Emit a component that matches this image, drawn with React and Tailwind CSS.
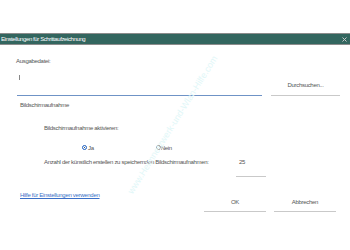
import React from "react";

export default function App() {
  return (
    <div className="relative w-[350px] h-[250px] overflow-hidden bg-white text-[#555] font-['Liberation_Sans',Arial,sans-serif] text-[6px] leading-[6px] tracking-[-0.3px]">
      <div className="h-[33px]" />
      <div className="h-[12px] border-y border-[#8c8c8c] bg-[#33665f] flex items-center justify-between pl-[1px] pr-[3px]">
        <span className="text-white text-[6px] leading-[6px] tracking-[-0.4px]">Einstellungen für Schrittaufzeichnung</span>
        <svg width="5" height="5" viewBox="0 0 5 5" className="block">
          <path d="M0.5 0.5 L4.5 4.5 M4.5 0.5 L0.5 4.5" stroke="#c8c8c8" strokeWidth="1" />
        </svg>
      </div>
      <div className="pl-[16px]">
        <div className="mt-[13px] h-[6px]">Ausgabedatei:</div>
        <div className="flex h-[32px]">
          <div className="ml-[1px] w-[245px] border-b border-[#6f93c6]">
            <div className="mt-[11px] ml-[2px] w-px h-[5px] bg-[#888]" />
          </div>
          <div className="ml-[9px] w-[69px] border-b border-[#c9c9c9] flex items-end justify-center pb-[7px]">
            <span className="h-[6px]">Durchsuchen...</span>
          </div>
        </div>
        <div className="mt-[6px] ml-[4px] h-[6px]">Bildschirmaufnahme</div>
        <div className="mt-[17px] ml-[28px] h-[6px]">Bildschirmaufnahme aktivieren:</div>
        <div className="mt-[14px] flex items-center h-[5px]">
          <div className="ml-[66px] flex items-center">
            <span className="w-[5px] h-[5px] rounded-full border-[1.5px] border-[#1d5fbf] bg-white flex items-center justify-center">
              <span className="w-[1.5px] h-[1.5px] rounded-full bg-[#123]" />
            </span>
            <span className="ml-[1px]">Ja</span>
          </div>
          <div className="ml-[62px] flex items-center">
            <span className="w-[5px] h-[5px] rounded-full border border-[#888] bg-white" />
            <span className="ml-[0px]">Nein</span>
          </div>
        </div>
        <div className="mt-[9px] flex h-[6px]">
          <span className="ml-[28px] w-[195px]">Anzahl der künstlich erstellen zu speichernden Bildschirmaufnahmen:</span>
          <span>25</span>
        </div>
        <div className="mt-[11px] ml-[220px] w-[30px] h-px bg-[#c9c9c9]" />
        <div className="mt-[15px] flex h-[20px]">
          <a className="ml-[4px] w-[184px] text-[#3a6fc8] underline decoration-[0.5px] h-[6px]">Hilfe für Einstellungen verwenden</a>
          <div className="w-[62px] border-b border-[#c9c9c9] flex items-end justify-center pb-[6px]">
            <span className="h-[6px]">OK</span>
          </div>
          <div className="ml-[8px] w-[62px] border-b border-[#c9c9c9] flex items-end justify-center pb-[6px]">
            <span className="h-[6px]">Abbrechen</span>
          </div>
        </div>
      </div>
      <div className="absolute left-[173px] top-[125px] -translate-x-1/2 -translate-y-1/2 -rotate-[58deg] whitespace-nowrap text-[9px] leading-[9px] tracking-normal text-[#e2f7f8] font-['Liberation_Sans',sans-serif]">
        www.Heimnetzwerk-und-Wlan-Hilfe.com
      </div>
    </div>
  );
}
